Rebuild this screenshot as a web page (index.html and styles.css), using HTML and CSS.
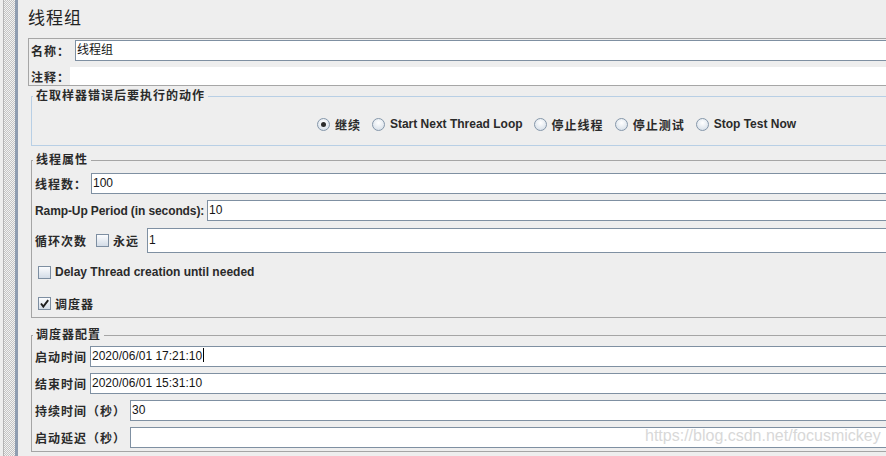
FILE: index.html
```html
<!DOCTYPE html>
<html lang="zh-CN">

<head>
    <meta charset="UTF-8">
    <title>线程组</title>
    <link rel="stylesheet" href="styles.css">
</head>

<body>
    <div class="window">
        <div class="treeEdge"></div>

        <div class="panel">
            <div class="title">线程组</div>

            <!-- 名称 / 注释 -->
            <div class="namePanel">
                <div class="nameRow">
                    <span class="cn nameLabel">名称：</span>
                    <div class="field">线程组</div>
                </div>
                <div class="commentRow">
                    <span class="cn commentLabel">注释：</span>
                    <div class="commentField"></div>
                </div>
            </div>

            <!-- 取样器错误 -->
            <fieldset class="group errorGroup">
                <legend class="cn">在取样器错误后要执行的动作</legend>
                <div class="radios">
                    <div class="option"><span class="radio checked"></span><span class="cn">继续</span></div>
                    <div class="option"><span class="radio"></span><span>Start Next Thread Loop</span></div>
                    <div class="option"><span class="radio"></span><span class="cn">停止线程</span></div>
                    <div class="option"><span class="radio"></span><span class="cn">停止测试</span></div>
                    <div class="option"><span class="radio"></span><span>Stop Test Now</span></div>
                </div>
            </fieldset>

            <!-- 线程属性 -->
            <fieldset class="group threadGroup">
                <legend class="cn">线程属性</legend>
                <div class="rows">
                    <div class="row">
                        <span class="cn threadsLabel">线程数：</span>
                        <div class="field">100</div>
                    </div>
                    <div class="row">
                        <span class="rampLabel">Ramp-Up Period (in seconds):</span>
                        <div class="field">10</div>
                    </div>
                    <div class="row loopRow">
                        <span class="cn loopLabel">循环次数</span>
                        <span class="check"></span>
                        <span class="cn foreverLabel">永远</span>
                        <div class="field">1</div>
                    </div>
                    <div class="checkRow delayRow">
                        <span class="check"></span>
                        <span>Delay Thread creation until needed</span>
                    </div>
                    <div class="checkRow schedRow">
                        <span class="check">
                            <svg width="11" height="11" viewBox="0 0 11 11">
                                <path d="M2 5.5 L4.3 8.6 L9.2 2.2" fill="none" stroke="#1e1e1e" stroke-width="1.9" />
                            </svg>
                        </span>
                        <span class="cn">调度器</span>
                    </div>
                </div>
            </fieldset>

            <!-- 调度器配置 -->
            <fieldset class="group schedGroup">
                <legend class="cn">调度器配置</legend>
                <div class="rows">
                    <div class="row">
                        <span class="cn timeLabel">启动时间</span>
                        <div class="field">2020/06/01 17:21:10<span class="caret"></span></div>
                    </div>
                    <div class="row">
                        <span class="cn timeLabel">结束时间</span>
                        <div class="field">2020/06/01 15:31:10</div>
                    </div>
                    <div class="row">
                        <span class="cn secLabel">持续时间（秒）</span>
                        <div class="field">30</div>
                    </div>
                    <div class="row">
                        <span class="cn secLabel">启动延迟（秒）</span>
                        <div class="field"></div>
                    </div>
                </div>
            </fieldset>
        </div>

        <div class="watermark">https://blog.csdn.net/focusmickey</div>
    </div>
</body>

</html>
```

FILE: styles.css
```css
html,
body {
    height: 100%;
}

body {
    margin: 0;
    background-color: #eeeeee;
    overflow: hidden;
    font: bold 12px "Liberation Sans", "Noto Sans CJK SC", sans-serif;
    color: #2a2a2a;
}

.window {
    display: flex;
    height: 456px;
    position: relative;
}

/* 左邊樹狀欄的邊緣 */
.treeEdge {
    flex: none;
    width: 11px;
    margin-left: 3px;
    border-left: 1px solid #b4b4b4;
    border-right: 3px solid #8f9db0;
    background: repeating-conic-gradient(#c4c4c4 0 25%, #f2f2f2 0 50%) 0 0 / 2px 2px;
}

.panel {
    flex: none;
    width: 1054px;
    padding-left: 10px;
}

.title {
    height: 38px;
    line-height: 38px;
    font-size: 17px;
    font-weight: normal;
    letter-spacing: 1px;
    color: #222;
}

.cn {
    letter-spacing: 1px;
}

/* 名稱 / 註釋 */
.namePanel {
    border: 1px solid #a6a6a6;
    border-right: none;
    padding: 1px 0 0 1px;
}

.nameRow,
.commentRow,
.row,
.checkRow,
.option {
    display: flex;
    align-items: center;
}

.nameRow {
    height: 21px;
}

.nameLabel {
    width: 44px;
    padding-left: 1px;
}

.commentRow {
    height: 18px;
    margin-top: 6px;
}

.commentLabel {
    width: 39px;
    padding-left: 1px;
}

.commentField {
    flex: 1;
    align-self: stretch;
    background-color: #fff;
}

.field {
    flex: 1;
    height: 19px;
    line-height: 19px;
    padding-left: 1px;
    background-color: #fff;
    border: 1px solid #7f90a2;
    border-right: none;
    font-weight: normal;
    color: #141414;
    white-space: nowrap;
}

.caret {
    display: inline-block;
    width: 1px;
    height: 14px;
    margin-left: 1px;
    vertical-align: -2px;
    background-color: #000;
}

/* 群組框 */
.group {
    margin: 0 2px 0 3px;
    padding: 0;
    border: 1px solid #a5a5a5;
}

.group legend {
    margin-left: 1px;
    padding: 0 3px;
    line-height: 14px;
    color: #2a2a2a;
}

.errorGroup {
    margin-top: 3px;
    border-color: #b8cfe5;
}

.threadGroup {
    margin-top: 7px;
}

.schedGroup {
    margin-top: 10px;
}

.radios {
    display: flex;
    justify-content: center;
    align-items: center;
    gap: 11px;
    height: 42px;
    padding-left: 2px;
}

.option {
    gap: 5px;
}

.radio {
    flex: none;
    width: 11px;
    height: 11px;
    border: 1px solid #8597aa;
    border-radius: 50%;
    background: radial-gradient(circle at 50% 35%, #ffffff, #cfd9e4);
    display: grid;
    place-items: center;
}

.radio.checked:after {
    content: '';
    width: 5px;
    height: 5px;
    border-radius: 50%;
    background-color: #2b2b2b;
}

.check {
    flex: none;
    width: 11px;
    height: 11px;
    border: 1px solid #7d8ea1;
    background: linear-gradient(#fbfcfe, #d3dce7);
    display: grid;
    place-items: center;
}

.check svg {
    display: block;
}

.rows {
    padding: 6px 0 2px 3px;
}

.row {
    height: 21px;
}

.row + .row {
    margin-top: 6px;
}

.threadsLabel {
    width: 56px;
}

.rampLabel {
    width: 172px;
    letter-spacing: -0.1px;
}

.loopRow {
    height: 25px;
    margin-top: 7px !important;
}

.loopRow .field {
    height: 23px;
    line-height: 23px;
}

.loopLabel {
    width: 61px;
}

.foreverLabel {
    width: 34px;
    margin-left: 4px;
}

.checkRow {
    gap: 4px;
    padding-left: 3px;
}

.delayRow {
    height: 26px;
    margin-top: 6px;
}

.schedRow {
    height: 24px;
    margin-top: 6px;
}

.schedGroup .rows {
    padding: 4px 0 3px 3px;
}

.timeLabel {
    width: 55px;
}

.secLabel {
    width: 95px;
}

.watermark {
    position: absolute;
    left: 645px;
    top: 427px;
    font-size: 16px;
    font-weight: normal;
    color: #d8d8d8;
    white-space: nowrap;
}
```
